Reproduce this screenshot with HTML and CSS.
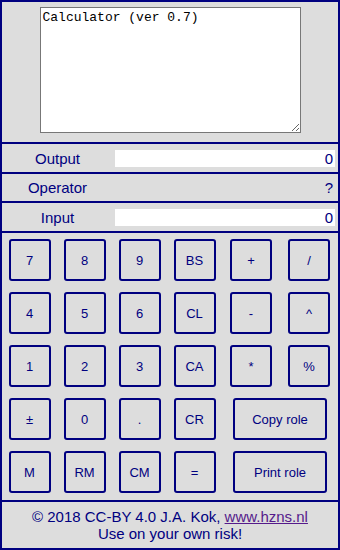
FILE: index.html
```html
<!DOCTYPE html>
<html lang="en">
<head>
  <meta charset="UTF-8" />
  <meta name="viewport" content="width=device-width, initial-scale=1.0"/>
  <title>Calculator</title>
  <link rel="stylesheet" href="styles.css">
</head>
<body>

  <div class="calc">
    <div class="roll">
      <textarea id="roll" spellcheck="false">Calculator (ver 0.7)</textarea>
    </div>

    <div class="line">
      <div class="label">Output</div>
      <input class="value" id="output" type="text" value="0" readonly>
    </div>
    <div class="line">
      <div class="label">Operator</div>
      <div class="op" id="operator">?</div>
    </div>
    <div class="line">
      <div class="label">Input</div>
      <input class="value" id="input" type="text" value="0" readonly>
    </div>

    <div class="keys">
      <button>7</button>
      <button>8</button>
      <button>9</button>
      <button>BS</button>
      <button>+</button>
      <button>/</button>

      <button>4</button>
      <button>5</button>
      <button>6</button>
      <button>CL</button>
      <button>-</button>
      <button>^</button>

      <button>1</button>
      <button>2</button>
      <button>3</button>
      <button>CA</button>
      <button>*</button>
      <button>%</button>

      <button>&plusmn;</button>
      <button>0</button>
      <button>.</button>
      <button>CR</button>
      <button class="wide">Copy role</button>

      <button>M</button>
      <button>RM</button>
      <button>CM</button>
      <button>=</button>
      <button class="wide">Print role</button>
    </div>

    <div class="footer">
      &copy; 2018 CC-BY 4.0 J.A. Kok, <a href="#">www.hzns.nl</a><br>
      Use on your own risk!
    </div>
  </div>

</body>
</html>
```

FILE: styles.css
```css
* {
  box-sizing: border-box;
  margin: 0;
  padding: 0;
}

body {
  background-color: #ddd;
  color: #000080;
  font-family: 'Liberation Sans', Arial, sans-serif;
  font-size: 15px;
}

.calc {
  width: 340px;
  height: 550px;
  border: 2px solid #000080;
  display: flex;
  flex-direction: column;
}

.roll {
  height: 142px;
  padding-top: 5px;
  border-bottom: 2px solid #000080;
  display: flex;
  justify-content: center;
  align-items: flex-start;
}

.roll textarea {
  width: 261px;
  height: 126px;
  border: 1px solid #777;
  padding: 2px;
  font-family: 'Liberation Mono', 'Courier New', monospace;
  font-size: 13px;
  color: #000;
  background: white;
  outline: none;
}

.line {
  height: 30px;
  border-bottom: 2px solid #000080;
  display: grid;
  grid-template-columns: 111px 1fr;
  column-gap: 2px;
  align-items: center;
  padding-right: 3px;
}

.line:nth-child(3) {
  height: 29px;
}

.label {
  text-align: center;
}

.value {
  height: 17px;
  border: none;
  background: white;
  color: #000080;
  font-family: 'Liberation Sans', Arial, sans-serif;
  font-size: 15px;
  text-align: right;
  padding: 0 2px;
  outline: none;
  width: 100%;
}

.op {
  text-align: right;
  padding-right: 2px;
}

.keys {
  height: 269px;
  border-bottom: 2px solid #000080;
  display: grid;
  grid-template-columns: 55px 55px 55px 55px 58px 58px;
  grid-auto-rows: 42px;
  row-gap: 11px;
  padding-top: 6px;
  justify-items: center;
}

.keys button {
  width: 42px;
  height: 42px;
  border: 2px solid #000080;
  border-radius: 3px;
  background-color: #ddd;
  color: #000080;
  font-family: 'Liberation Sans', Arial, sans-serif;
  font-size: 13px;
  cursor: pointer;
}

.keys .wide {
  grid-column: span 2;
  width: 94px;
}

.footer {
  flex: 1;
  text-align: center;
  line-height: 17px;
  padding-top: 6px;
}

.footer a {
  color: #551a8b;
}
```
